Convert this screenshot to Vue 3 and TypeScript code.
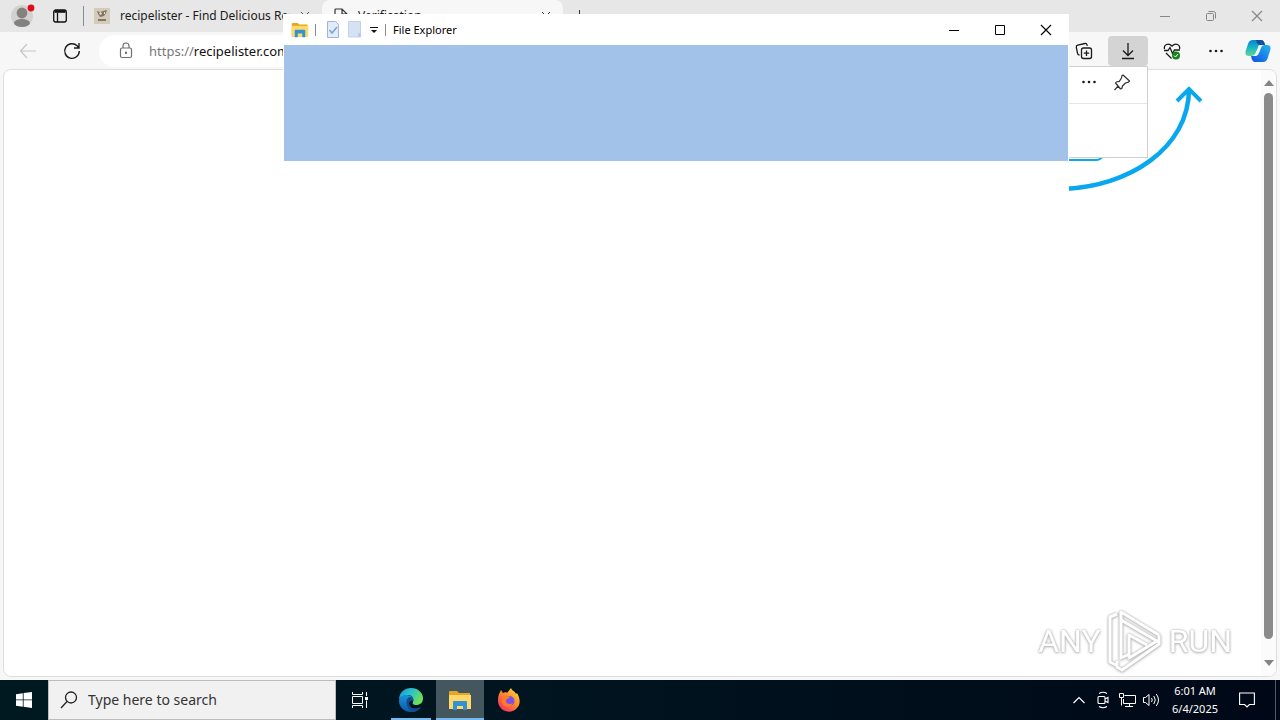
<script setup lang="ts">
import { ref } from 'vue'

const address = ref('https://recipelister.com')
const query = ref('')
</script>

<template>
  <div class="desktop">
    <main class="browser">
      <header class="tabs">
        <button class="profile" aria-label="Profile">
          <svg width="28" height="28" viewBox="0 0 28 28"><circle cx="14" cy="14" r="11" fill="#d3d1d0"/><circle cx="14" cy="11" r="5.4" fill="#85817f"/><ellipse cx="14" cy="21" rx="8" ry="4" fill="#85817f"/><circle cx="23" cy="6" r="3.4" fill="#e00b1c"/></svg>
        </button>
        <button class="tabmenu" aria-label="Tab actions">
          <svg width="16" height="16" viewBox="0 0 16 16" fill="none" stroke="#111" stroke-width="1.3"><rect x="1.7" y="2" width="12.6" height="12" rx="2"/><path d="M5.5 5v9" /><path d="M2.5 3.5h11" stroke-width="2.6"/></svg>
        </button>
        <span class="split"></span>
        <button class="tab first">
          <svg width="16" height="16" viewBox="0 0 16 16"><rect width="16" height="16" fill="#d5cbbb"/><path d="M3 3l3 1 3-1 4-1-1 3-2 3-4 1-2-3zM4 11h8v2H4z" fill="#827668"/><path d="M5 5l2-1 1 2-2 1zM10 4h1v2h-1z" fill="#e6ddce"/></svg>
          <span class="name">recipelister - Find Delicious Recipes</span>
          <svg width="10" height="10" viewBox="0 0 10 10" fill="none" stroke="#555"><path d="M1 1l8 8M9 1l-8 8"/></svg>
        </button>
        <button class="tab active">
          <svg width="14" height="16" viewBox="0 0 14 16" fill="none" stroke="#333" stroke-width="1.2"><path d="M1 15V2q0-1 1-1h6l5 5v9zM8 1v5h5"/></svg>
          <span class="name">Verification</span>
          <svg width="10" height="10" viewBox="0 0 10 10" fill="none" stroke="#333"><path d="M1 1l8 8M9 1l-8 8"/></svg>
        </button>
        <button class="new" aria-label="New tab">
          <svg width="13" height="13" viewBox="0 0 13 13" fill="none" stroke="#333"><path d="M6.5 0v13M0 6.5h13"/></svg>
        </button>
        <div class="controls">
          <button aria-label="Minimize"><svg width="12" height="12" viewBox="0 0 12 12" stroke="#868686"><path d="M1 6.5h10"/></svg></button>
          <button aria-label="Restore"><svg width="12" height="12" viewBox="0 0 12 12" fill="none" stroke="#868686"><rect x="1.5" y="3.5" width="7" height="7" rx="1"/><path d="M3.5 1.5h5q2 0 2 2v5"/></svg></button>
          <button aria-label="Close"><svg width="12" height="12" viewBox="0 0 12 12" stroke="#868686" stroke-width="1.2"><path d="M1 1l10 10M11 1L1 11"/></svg></button>
        </div>
      </header>
      <nav class="toolbar">
        <button class="nav" aria-label="Back"><svg width="18" height="16" viewBox="0 0 18 16" fill="none" stroke="#c5c5c5" stroke-width="1.2"><path d="M17 8H2M8 1L1.500 8 8 15"/></svg></button>
        <button class="nav" aria-label="Refresh"><svg width="18" height="18" viewBox="0 0 18 18" fill="none" stroke="#1b1b1b" stroke-width="1.4"><path d="M16.300 9a7.300 7.300 0 1 1-2.200-5.200L16 5.700M16 1v5h-5"/></svg></button>
        <div class="omnibox">
          <svg width="14" height="17" viewBox="0 0 14 17" fill="none" stroke="#707070" stroke-width="1.2"><rect x="1.500" y="6" width="11" height="9.500" rx="1.500"/><path d="M4 6V4q0-3 3-3t3 3v2"/><circle cx="7" cy="10.700" r=".6" fill="#707070"/></svg>
          <label class="address"><span class="shown" aria-hidden="true"><i>https://</i>recipelister.com</span><input v-model="address" aria-label="Address"></label>
        </div>
        <div class="tools">
          <button aria-label="Collections"><svg width="18" height="18" viewBox="0 0 18 18" fill="none" stroke="#1b1b1b" stroke-width="1.300"><rect x="6.500" y="6" width="10" height="10.500" rx="2"/><path d="M11.500 8.500v5.500M8.800 11.200h5.400M4.500 13Q3 13 2.600 11.500L1.300 5.500Q1 3.700 2.700 3.200L10 1.500q1.500-.3 2 1.200l.3 1.100"/></svg></button>
          <button class="pressed" aria-label="Downloads"><svg width="18" height="18" viewBox="0 0 18 18" fill="none" stroke="#1b1b1b" stroke-width="1.300"><path d="M9 1v12M4 8.500l5 5 5-5M3 16.500h12"/></svg></button>
          <button aria-label="Browser essentials"><svg width="18" height="18" viewBox="0 0 18 18" fill="none" stroke="#1b1b1b" stroke-width="1.300"><path d="M1.500 7C.5 3 5 0 9 4c4-4 8.500-1 7.500 3M1 8.500h4l2-3 2.500 6 2-3.500H17M3 11l5.500 5.500"/><circle cx="13" cy="13.500" r="4" fill="#16851b" stroke="none"/><path d="M11 13.500l1.500 1.500 2.500-3" stroke="#fff" stroke-width="1"/></svg></button>
          <button aria-label="Settings and more"><svg width="16" height="16" viewBox="0 0 16 16" fill="#1b1b1b"><circle cx="2.500" cy="8" r="1.300"/><circle cx="8" cy="8" r="1.300"/><circle cx="13.500" cy="8" r="1.300"/></svg></button>
          <button class="copilot" aria-label="Copilot">
            <svg width="26" height="24" viewBox="0 0 26 24">
              <defs><linearGradient id="cpa" x1="0" y1="0" x2="0" y2="1"><stop stop-color="#0a82cf"/><stop offset=".5" stop-color="#18b8c8"/><stop offset="1" stop-color="#67d68a"/></linearGradient><linearGradient id="cpb" x1="1" y1="0" x2="0" y2="1"><stop stop-color="#20b8f0"/><stop offset="1" stop-color="#164ee0"/></linearGradient></defs>
              <path d="M8 1h8q3 0 4 5h-4q-2 0-3 3l-2 5q-1 3-4 3H4q-5 0-3-6l2-6q1-4 5-4z" fill="url(#cpa)"/>
              <path d="M10 1h6q3 0 4 5h-5Q12 6 11 1z" fill="#124f9e"/>
              <path d="M18 23h-8q-3 0-4-6h4q2 0 3-3l2-5q1-3 4-3h3q5 0 3 6l-2 6q-1 5-5 5z" fill="url(#cpb)"/>
              <path d="M16 6h-1q-2 0-2 3l-3 6q-1 2-3 2h4q2 0 3-3l2-5q1-3 3-3z" fill="#f2fafa"/>
            </svg>
          </button>
        </div>
      </nav>
      <section class="page">
        <svg class="swoop" width="140" height="112" viewBox="0 0 140 112" fill="none" stroke="#08a7f0">
          <path d="M0 110C67 108 127 69 127 10" stroke-width="4.500"/>
          <path d="M115 22L127 10l12 12" stroke-width="4"/>
          <path d="M0 81h34q4 0 6-3" stroke-width="2"/>
        </svg>
        <div class="scroll"><span class="up"></span><span class="thumb"></span><span class="down"></span></div>
      </section>

      <aside class="flyout" aria-label="Downloads">
        <div class="flyhead">
          <button aria-label="More options"><svg width="16" height="16" viewBox="0 0 16 16" fill="#1b1b1b"><circle cx="2.500" cy="8" r="1.300"/><circle cx="8" cy="8" r="1.300"/><circle cx="13.500" cy="8" r="1.300"/></svg></button>
          <button aria-label="Pin"><svg width="18" height="18" viewBox="0 0 18 18" fill="none" stroke="#303030" stroke-width="1.200" stroke-linejoin="round"><path d="M10 2l6.500 6-1 1.200-3 .8-3 3-.7 2.500L7.500 16 2.500 10l.8-1 3-.7L8.500 5 9 2.500zM5.300 12.800L1.500 17"/></svg></button>
        </div>
      </aside>
    </main>

    <section class="explorer" aria-label="File Explorer">
      <header class="titlebar">
        <svg class="folder" width="18" height="16" viewBox="0 0 24 21"><path d="M1 2q0-1 1-1h7l2 2h11v16H1z" fill="#e5a528"/><path d="M1 5h22v14H1z" fill="#ffd968"/><path d="M5 20v-9q0-1 1-1h12q1 0 1 1v9h-4v-5H9v5z" fill="#3292d5"/></svg>
        <span class="line"></span>
        <button class="prop" aria-label="Properties"><svg width="14" height="17" viewBox="0 0 14 17"><path d="M1.500.5h8l3 3v13h-11z" fill="#e2ecf8" stroke="#9eb6d3"/><path d="M3.500 9l2.500 3 5-6" fill="none" stroke="#7ba2d2" stroke-width="1.500"/></svg></button>
        <button class="folderbtn" aria-label="New folder"><svg width="14" height="17" viewBox="0 0 14 17"><path d="M.5.500h12v15.500H.500z" fill="#d5e2f5" stroke="#c3d3e9"/><path d="M10 12h3v4h-3z" fill="#b8cbe6"/></svg></button>
        <button class="more" aria-label="Customize toolbar"><svg width="8" height="8" viewBox="0 0 8 8"><path d="M0 1h8v1H0zM1 4h6L4 7z" fill="#111"/></svg></button>
        <span class="line second"></span>
        <span class="caption">File Explorer</span>
        <div class="controls">
          <button aria-label="Minimize"><svg width="12" height="12" viewBox="0 0 12 12" stroke="#000"><path d="M1 6.500h10"/></svg></button>
          <button aria-label="Maximize"><svg width="12" height="12" viewBox="0 0 12 12" fill="none" stroke="#000"><path d="M1.500 1.500h9v9h-9z"/></svg></button>
          <button aria-label="Close"><svg width="12" height="12" viewBox="0 0 12 12" stroke="#000" stroke-width="1.100"><path d="M1 1l10 10M11 1L1 11"/></svg></button>
        </div>
      </header>
      <div class="ribbon"></div>
      <div class="body"></div>
    </section>

    <div class="mark">
      <span>ANY</span>
      <svg width="60" height="66" viewBox="0 0 60 66" fill="none" stroke="#fff" stroke-width="3" stroke-linejoin="round">
        <path d="M12 6L5 9v45l6 3M54 27L16 4v46l8-4M16 12l36 21-28 17V27l18 10M54 27v9L17 62l-5-3v-6"/>
      </svg>
      <span>RUN</span>
    </div>

    <footer class="taskbar">
      <button class="start" aria-label="Start"><svg width="16" height="16" viewBox="0 0 16 16" fill="#fff"><path d="M0 2.200l6.800-1v6.300H0zM7.600 1.100L16 0v7.500H7.600zM0 8.300h6.800v6.500L0 13.800zM7.600 8.300H16V16l-8.400-1.200z"/></svg></button>
      <label class="search">
        <svg width="18" height="18" viewBox="0 0 18 18" fill="none" stroke="#222" stroke-width="1.300"><circle cx="11" cy="6.500" r="5.500"/><path d="M7 10.500L1 17"/></svg>
        <input v-model="query" placeholder="Type here to search" aria-label="Search">
      </label>
      <button class="app" aria-label="Task View"><svg width="17" height="16" viewBox="0 0 17 16" fill="none" stroke="#fff"><path d="M.5 0v2.500h10V0M.5 16v-2.500h10V16M.5 4.500h10v7H.500zM14.500 0v4M14.500 8.500V16"/><path d="M13 5h3v3h-3z" fill="#fff" stroke="none"/></svg></button>
      <button class="app running" aria-label="Microsoft Edge">
        <svg width="26" height="26" viewBox="0 0 26 26">
          <defs><linearGradient id="ega" x1="0" y1="0" x2="1" y2=".5"><stop stop-color="#1697d9"/><stop offset=".5" stop-color="#2bc2c9"/><stop offset="1" stop-color="#6ee056"/></linearGradient><linearGradient id="egb" x1="0" y1="0" x2="0" y2="1"><stop stop-color="#1793df"/><stop offset="1" stop-color="#0c59a7"/></linearGradient></defs>
          <path d="M1 13C1 5 7 1 13 1c7 0 12 5 12 10 0 5-3 7-7 7-3 0-4-1-3-3 1-4-1-7-5-7-5 0-9 3-9 5z" fill="url(#ega)"/>
          <path d="M1 14c0-4 4-6 8-6s7 3 6.500 6c-2-2-5 0-4.500 3 .5 5 7 6 12 3-2 3-6 5-10 5-7 0-12-5-12-11z" fill="url(#egb)"/>
          <path d="M11.500 10C7 12 7 20 14 25c4 0 7-2 9-5-5 3-11.500 1.500-12-3-.3-3 2-4 4.500-3 0-2-1-4-4-4z" fill="#134b8f"/>
        </svg>
      </button>
      <button class="app running current" aria-label="File Explorer"><svg width="24" height="21" viewBox="0 0 24 21"><path d="M1 2q0-1 1-1h7l2 2h11v16H1z" fill="#e5a528"/><path d="M1 5h22v14H1z" fill="#ffd968"/><path d="M5 20v-8q0-1 1-1h12q1 0 1 1v8h-4v-4H9v4z" fill="#3292d5"/></svg></button>
      <button class="app" aria-label="Firefox">
        <svg width="24" height="24" viewBox="0 0 24 24">
          <defs><linearGradient id="ffa" x1="1" y1="0" x2=".2" y2="1"><stop stop-color="#fff04a"/><stop offset=".45" stop-color="#ff9328"/><stop offset="1" stop-color="#f52b68"/></linearGradient></defs>
          <path d="M2 6l2-4 2 3 3-1 1 1 4-5c1 3 4 3 5 6l1-1c4 7 3 12 0 15-5 6-14 4-17-1-3-4-2-10-1-13z" fill="url(#ffa)"/>
          <circle cx="12.500" cy="13" r="5" fill="#7951e8"/><path d="M6 8c3-2 5 0 7 1-1 2-4 1-4 4s4 4 7 2c-2 5-9 5-11 0-1-3 0-5 1-7z" fill="#ff7b28"/>
        </svg>
      </button>
      <div class="tray">
        <button class="trayicon" aria-label="Show hidden icons"><svg width="12" height="8" viewBox="0 0 12 8" fill="none" stroke="#fff" stroke-width="1.200"><path d="M.5 7L6 1.500 11.500 7"/></svg></button>
        <button class="trayicon" aria-label="Meet Now"><svg width="14" height="18" viewBox="0 0 14 18" fill="none" stroke="#fff" stroke-width="1.100"><rect x="2" y="5.500" width="7" height="7" rx="1"/><path d="M9 8l3-1.500v5L9 10M3 2.500q4-2.500 8 0M3 15.500q4 2.500 8 0"/></svg></button>
        <button class="trayicon" aria-label="Network"><svg width="17" height="15" viewBox="0 0 17 15" fill="none" stroke="#fff"><path d="M5.500 2.500h11v8h-12V6M.500.500h4v4h-4zM2.500 4.500v8M10.500 10.500v3M6 13.500h8"/></svg></button>
        <button class="trayicon" aria-label="Volume"><svg width="17" height="14" viewBox="0 0 17 14" fill="none" stroke="#fff"><path d="M.5 4.500h2L6 1.500v11L2.500 9.500h-2zM8.500 5q1.500 2 0 4M10.800 3q3 4 0 8M13.200 1q4.600 6 0 12"/></svg></button>
        <time class="clock"><span>6:01 AM</span><span>6/4/2025</span></time>
        <button class="notes" aria-label="Notifications"><svg width="16" height="16" viewBox="0 0 16 16" fill="none" stroke="#fff" stroke-width="1.100"><path d="M.6 1h14.800v11.500h-5L8 15l-2.400-2.500h-5z"/></svg></button>
        <span class="peek"></span>
      </div>
    </footer>
  </div>
</template>

<style>
html, body { height: 100%; }
body { margin: 0; overflow: hidden; }
</style>

<style scoped>
.desktop { position: relative; height: 100vh; display: flex; flex-direction: column; overflow: hidden; background: #f7f7f7; font-family: "Noto Sans", "Open Sans", sans-serif; font-size: 12px; color: #1b1b1b; }
.desktop * { box-sizing: border-box; }
button { border: 0; padding: 0; margin: 0; background: none; font: inherit; color: inherit; display: flex; align-items: center; justify-content: center; flex: none; }
svg { display: block; flex: none; }
input { border: 0; outline: 0; padding: 0; background: none; font: inherit; }
.browser { position: relative; flex: 1; min-height: 0; display: flex; flex-direction: column; }
.tabs { height: 32px; flex: none; display: flex; align-items: center; background: #e7e7e7; }
.profile { width: 28px; margin-left: 8px; }
.tabmenu { width: 16px; margin-left: 16px; }
.split { width: 1px; height: 20px; margin: 0 10px 0 15px; background: #8c8c96; }
.tab { justify-content: flex-start; height: 32px; gap: 10px; white-space: nowrap; }
.first { width: 228px; padding-right: 12px; }
.name { flex: 1; min-width: 0; overflow: hidden; line-height: 20px; text-align: left; }
.active { width: 241px; padding: 0 12px; background: #f7f7f7; border-radius: 8px 8px 0 0; }
.new { width: 32px; }
.controls { display: flex; margin-left: auto; height: 100%; }
.controls button { width: 46px; }
.toolbar { height: 37px; flex: none; display: flex; align-items: center; }
.nav { width: 44px; }
.nav:first-child { margin-left: 6px; }
.omnibox { height: 32px; flex: 1; margin-left: 5px; padding-left: 20px; display: flex; align-items: center; gap: 16px; border-radius: 16px; background: #fff; }
.address { position: relative; flex: 1; font-size: 13px; line-height: 20px; }
.shown { color: #111; }
.shown i { font-style: normal; color: #777; }
.address input { position: absolute; inset: 0; width: 100%; color: transparent; }
.tools { display: flex; gap: 4px; padding-right: 4px; }
.tools button { width: 40px; height: 30px; border-radius: 4px; }
.tools .copilot { width: 36px; }
.tools .pressed { background: #d4d4d4; }
.page { position: relative; flex: 1; margin: 0 3px 3px; border: 1px solid #dedede; border-radius: 8px; background: #fff; overflow: hidden; }
.swoop { position: absolute; right: 74px; top: 9px; }
.scroll { position: absolute; right: 0; top: 0; bottom: 0; width: 15px; display: flex; flex-direction: column; align-items: center; gap: 7px; padding: 10px 0; background: #fbfbfb; }
.thumb { width: 9px; flex: 1; margin-bottom: 14px; border-radius: 5px; background: #8b8b8b; }
.up, .down { border: 5px solid transparent; border-top: 0; border-bottom: 6px solid #858585; }
.down { border-top: 6px solid #858585; border-bottom: 0; }
.mark { position: absolute; right: 48px; bottom: 46px; display: flex; align-items: center; gap: 4px; color: #fff; font: 32px/40px Roboto, sans-serif; filter: drop-shadow(0 0 1px #aaa) drop-shadow(0 1px 1px #ccc); }
.flyout { position: absolute; right: 132px; top: 66px; width: 400px; height: 92px; background: #fff; border: 1px solid #d0d0d0; }
.flyhead { height: 37px; display: flex; align-items: center; justify-content: flex-end; gap: 16px; padding: 0 16px 6px 0; border-bottom: 1px solid #e5e5e5; }
.explorer { position: absolute; left: 283px; right: 211px; top: 14px; bottom: 45px; display: flex; flex-direction: column; background: #fff; }
.titlebar { height: 31px; flex: none; display: flex; align-items: center; padding-left: 8px; color: #000; font-size: 11px; }
.line { width: 1px; height: 12px; margin: 0 10px 0 6px; background: #8b8b8b; }
.folderbtn { margin: 0 8px; }
.line.second { margin: 0 7px; }
.ribbon { height: 116px; margin: 0 1px; flex: none; background: #a3c2ea; }
.body { flex: 1; }
.taskbar { height: 40px; flex: none; display: flex; background: linear-gradient(90deg, #001820, #00141f 45%, #000817); color: #fff; }
.start { width: 48px; }
.search { width: 288px; display: flex; align-items: center; gap: 10px; padding-left: 11px; background: #f1f1f1; border: 1px solid #bcbcbc; }
.search input { flex: 1; min-width: 0; font-size: 14px; line-height: 20px; color: #333; }
.search input::placeholder { color: #333; opacity: 1; }
.app { position: relative; width: 48px; margin-right: 1px; }
.search + .app { width: 48px; margin-right: 3px; }
.running::after { content: ""; position: absolute; left: 4px; right: 4px; bottom: 0; height: 2px; background: #76b9ed; }
.current { background: #44565e; }
.current::after { left: 0; right: 0; }
.tray { display: flex; margin-left: auto; }
.trayicon { width: 24px; }
.clock { width: 64px; display: flex; flex-direction: column; align-items: center; justify-content: center; font-size: 11px; line-height: 18px; }
.notes { width: 40px; }
.peek { width: 5px; margin-left: 8px; border-left: 1px solid #4e5964; }
</style>
